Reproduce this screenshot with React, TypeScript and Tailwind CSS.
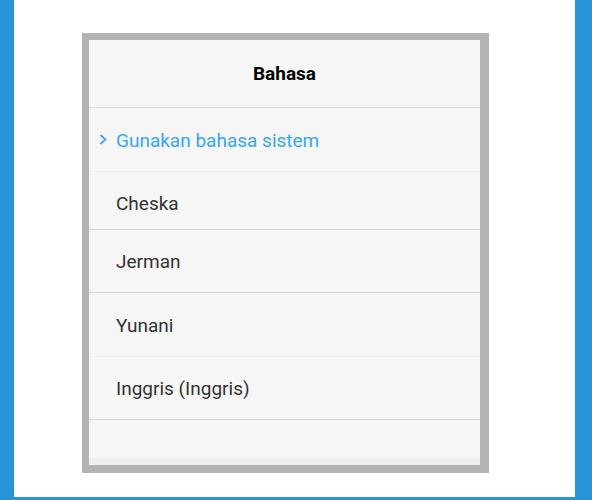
import React from "react";

function Row({
  label,
  active,
  h,
  border,
  pt,
}: {
  label: string;
  active?: boolean;
  h: string;
  border: string;
  pt: string;
}) {
  return (
    <div className={`relative flex items-center ${h} ${border} ${pt}`}>
      {active && (
        <svg
          className="absolute left-[10px] top-[26px]"
          width="9"
          height="11"
          viewBox="0 0 9 11"
          fill="none"
        >
          <path d="M1.5 1 L6.5 5.5 L1.5 10" stroke="#38a6f3" strokeWidth="1.7" />
        </svg>
      )}
      <span
        className={`pl-[27px] text-[19px] ${active ? "text-[#38a6f3]" : "text-[#333333]"}`}
      >
        {label}
      </span>
    </div>
  );
}

export default function App() {
  return (
    <div
      className="w-[592px] h-[500px] bg-[#2794d8] pl-[14px] pr-[17px] pb-[3px]"
      style={{ fontFamily: "Roboto, 'Noto Sans', sans-serif" }}
    >
      <div className="w-full h-full bg-white pl-[68px] pt-[33px]">
        <div className="w-[407px] h-[440px] border-[#b3b3b3] border-l-[7px] border-t-[7px] border-r-[9px] border-b-[8px] bg-[#f6f6f6] flex flex-col">
          <div className="h-[68px] shrink-0 flex items-center justify-center border-b border-[#dcdcdc] pt-[2px]">
            <span className="text-[19px] font-bold text-black">Bahasa</span>
          </div>
          <Row label="Gunakan bahasa sistem" active h="h-[64px] shrink-0" border="border-b border-[#efefef]" pt="pt-[3px]" />
          <Row label="Cheska" h="h-[58px] shrink-0" border="border-b border-[#d6d6d6]" pt="pt-[7px]" />
          <Row label="Jerman" h="h-[63px] shrink-0" border="border-b border-[#d6d6d6]" pt="pt-[3px]" />
          <Row label="Yunani" h="h-[64px] shrink-0" border="border-b border-[#efefef]" pt="pt-[3px]" />
          <Row label="Inggris (Inggris)" h="h-[63px] shrink-0" border="border-b border-[#d6d6d6]" pt="pt-[3px]" />
          <div className="flex-1" />
          <div className="h-[7px] shrink-0 bg-[#efefef]" />
        </div>
      </div>
    </div>
  );
}
